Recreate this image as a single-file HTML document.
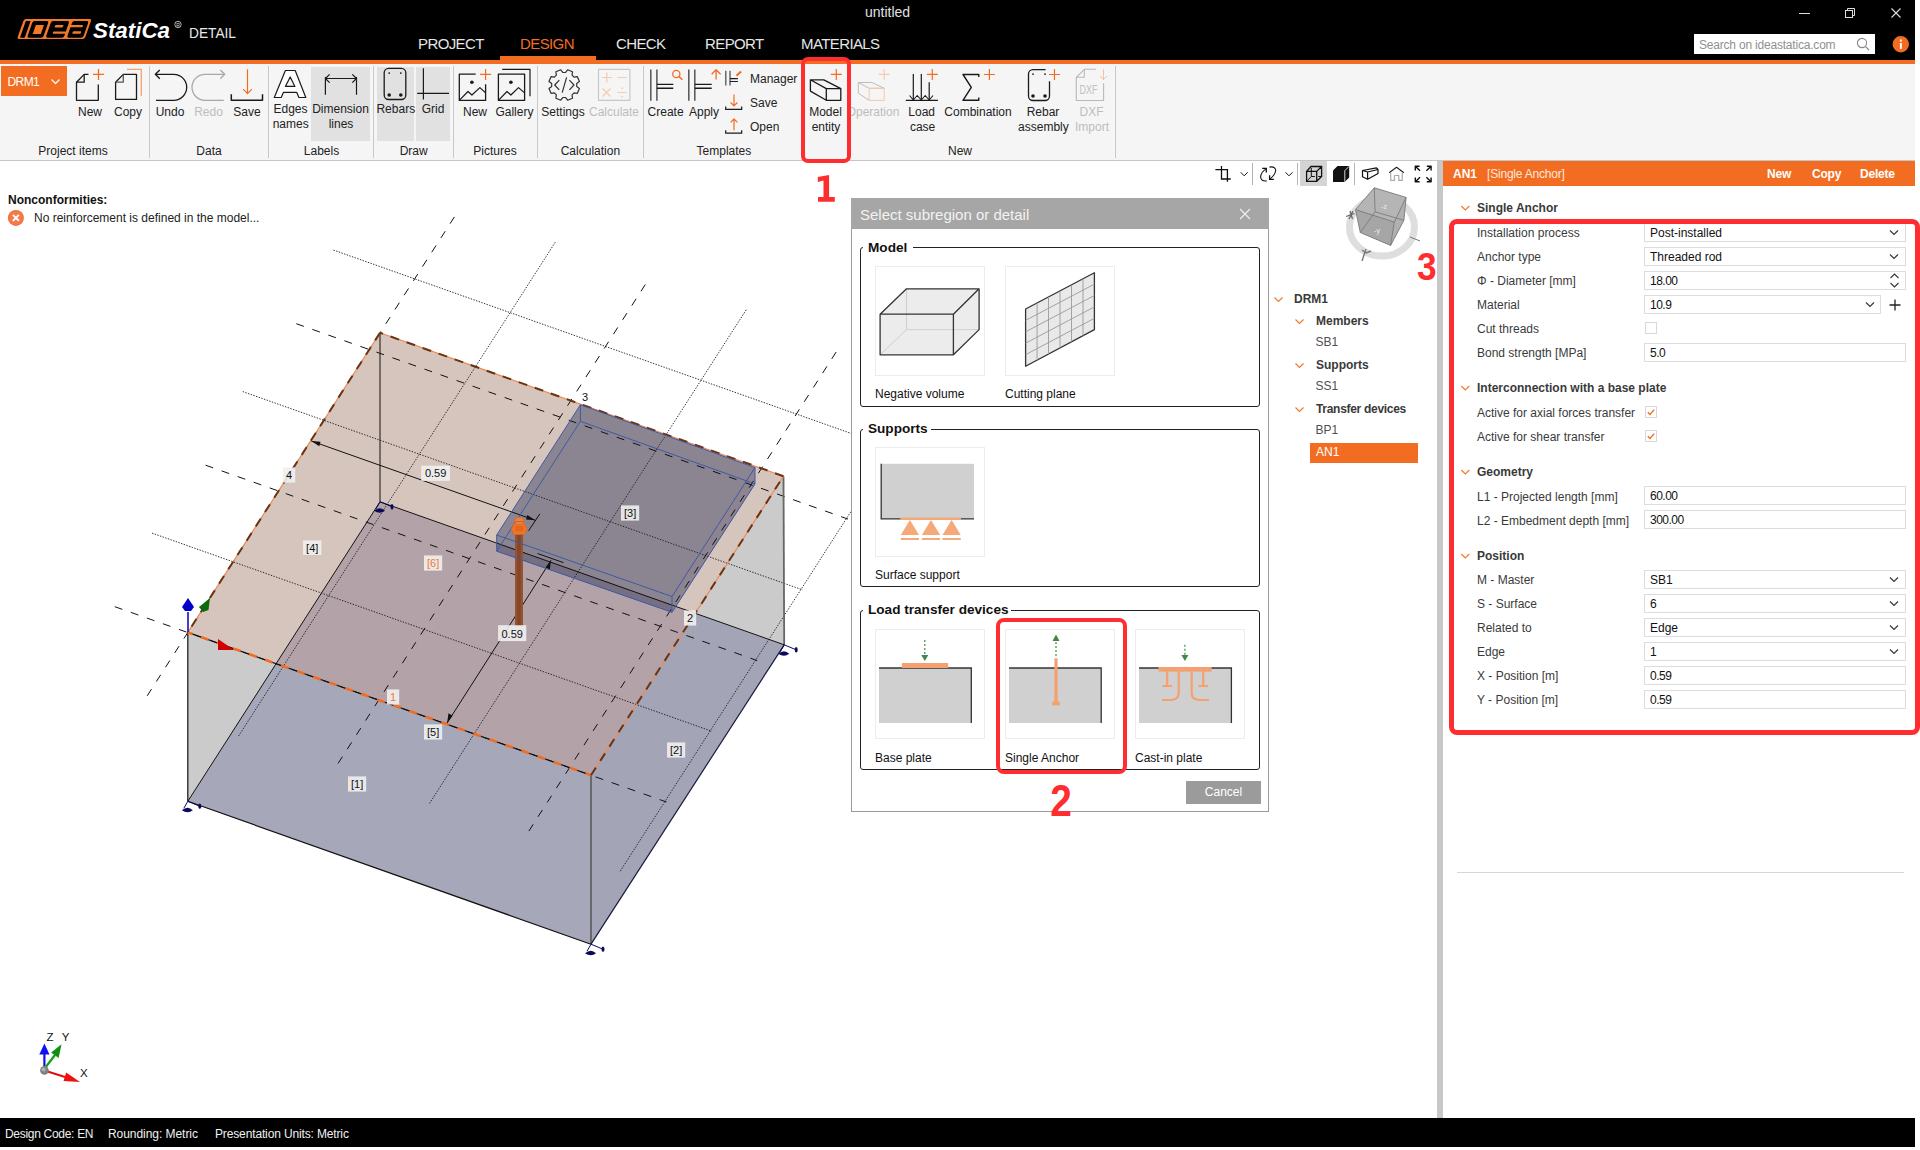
<!DOCTYPE html>
<html><head><meta charset="utf-8">
<style>
*{box-sizing:border-box}
html,body{margin:0;padding:0}
body{width:1920px;height:1150px;position:relative;overflow:hidden;background:#fff;font-family:"Liberation Sans",sans-serif;font-size:12px;color:#222}
.a{position:absolute;white-space:nowrap}
.bl{background:#000}
.or{background:#f26d22}
.menu{position:absolute;top:36px;font-size:15px;color:#e6e6e6;letter-spacing:-0.6px;line-height:15px}
.rb{position:absolute;font-size:12px;line-height:14px;color:#222;text-align:center;white-space:nowrap}
.dis{color:#bdbdbd}
.sep{position:absolute;top:66px;width:1px;height:92px;background:#c9c9c9}
.grp{position:absolute;top:144px;font-size:12px;line-height:14px;color:#222;white-space:nowrap}
.lbl{position:absolute;left:1477px;font-size:12px;color:#3a3a3a;line-height:14px;white-space:nowrap}
.fld{position:absolute;left:1644px;width:262px;height:19px;border:1px solid #dcdcdc;background:#fff;font-size:12px;line-height:18px;padding-left:5px;color:#111;white-space:nowrap}
.num{letter-spacing:-0.5px}
.sec{position:absolute;left:1477px;font-size:12px;font-weight:bold;color:#3a3a3a;line-height:14px;white-space:nowrap}
.chev{position:absolute;width:7px;height:7px;border-right:1.3px solid #f26d22;border-bottom:1.3px solid #f26d22;transform:rotate(45deg)}
.dchev{position:absolute;width:6px;height:6px;border-right:1.2px solid #333;border-bottom:1.2px solid #333;transform:rotate(45deg)}
.tree{position:absolute;font-size:12px;line-height:14px;color:#444;white-space:nowrap}
</style></head>
<body>
<!-- 3D view -->
<svg class="a" style="left:0;top:161px" width="1437" height="956" viewBox="0 161 1437 956">
<polygon points="187.8,632.4 380.0,332.8 783.5,476.2 695.2,613.3 380.0,501.8 276.1,663.6" fill="#d6c5bd" />
<polygon points="591.0,775.2 695.2,613.3 380.0,501.8 276.1,663.6" fill="#b3a3a9" />
<polygon points="187.8,632.4 276.1,663.6 187.8,801.3" fill="#cbcbcb" />
<polygon points="695.2,613.3 783.5,476.2 784.2,644.8" fill="#cbcbcb" />
<polygon points="276.1,663.6 591.0,775.2 591.0,944.2 187.8,801.3" fill="#a6a7b9" />
<polygon points="591.0,775.2 695.2,613.3 784.2,644.8 591.0,944.2" fill="#a3a4b6" />
<polygon points="580.4,404.8 755.0,467.6 755.0,483.9 672.0,612.3 496.7,551.2 496.7,535.0" fill="#8b8592" />
<polygon points="496.7,543.1 672.0,605.1 672.0,612.3 496.7,551.2" fill="#766e82" />
<polygon points="672.0,596.5 755.0,467.6 755.0,483.9 672.0,612.3" fill="#8e848f" />
<g>
<line x1="114.8" y1="606.7" x2="666.5" y2="802.0" stroke="#111" stroke-width="1" stroke-dasharray="8 9"/>
<line x1="152.0" y1="533.1" x2="711.9" y2="731.3" stroke="#1a1a1a" stroke-width="0.9" stroke-dasharray="1.4 1.4"/>
<line x1="205.6" y1="465.2" x2="757.2" y2="660.6" stroke="#111" stroke-width="1" stroke-dasharray="8 9"/>
<line x1="242.8" y1="391.6" x2="802.6" y2="589.9" stroke="#1a1a1a" stroke-width="0.9" stroke-dasharray="1.4 1.4"/>
<line x1="296.3" y1="323.7" x2="848.0" y2="519.1" stroke="#111" stroke-width="1" stroke-dasharray="8 9"/>
<line x1="333.5" y1="250.1" x2="893.4" y2="448.4" stroke="#1a1a1a" stroke-width="0.9" stroke-dasharray="1.4 1.4"/>
<line x1="454.4" y1="216.9" x2="143.1" y2="702.2" stroke="#111" stroke-width="1" stroke-dasharray="8 9"/>
<line x1="555.3" y1="242.2" x2="238.6" y2="736.0" stroke="#1a1a1a" stroke-width="0.9" stroke-dasharray="1.4 1.4"/>
<line x1="645.3" y1="284.5" x2="334.0" y2="769.8" stroke="#111" stroke-width="1" stroke-dasharray="8 9"/>
<line x1="746.2" y1="309.8" x2="429.4" y2="803.6" stroke="#1a1a1a" stroke-width="0.9" stroke-dasharray="1.4 1.4"/>
<line x1="836.1" y1="352.1" x2="524.8" y2="837.4" stroke="#111" stroke-width="1" stroke-dasharray="8 9"/>
<line x1="937.0" y1="377.4" x2="620.2" y2="871.2" stroke="#1a1a1a" stroke-width="0.9" stroke-dasharray="1.4 1.4"/>
</g>
<line x1="187.8" y1="632.4" x2="187.8" y2="801.3" stroke="#111" stroke-width="1.2" />
<line x1="380.0" y1="332.8" x2="380.0" y2="501.8" stroke="#111" stroke-width="1" />
<line x1="591.0" y1="775.2" x2="591.0" y2="944.2" stroke="#555" stroke-width="1.5" />
<line x1="783.5" y1="476.2" x2="784.2" y2="644.8" stroke="#666" stroke-width="1.8" />
<line x1="187.8" y1="801.3" x2="591.0" y2="944.2" stroke="#111" stroke-width="1.2" />
<line x1="591.0" y1="944.2" x2="784.2" y2="644.8" stroke="#1a1a40" stroke-width="1.2" />
<line x1="187.8" y1="801.3" x2="380.0" y2="501.8" stroke="#111" stroke-width="1" />
<line x1="380.0" y1="501.8" x2="784.2" y2="644.8" stroke="#111" stroke-width="1" />
<line x1="591.0" y1="775.2" x2="783.5" y2="476.2" stroke="#ec8a55" stroke-width="1.2" />
<line x1="783.5" y1="476.2" x2="380.0" y2="332.8" stroke="#ec8a55" stroke-width="1.2" />
<line x1="380.0" y1="332.8" x2="187.8" y2="632.4" stroke="#ec8a55" stroke-width="1.2" />
<line x1="187.8" y1="632.4" x2="591.0" y2="775.2" stroke="#111" stroke-width="1.2" />
<line x1="187.8" y1="632.4" x2="591.0" y2="775.2" stroke="#f26d22" stroke-width="2.6" stroke-dasharray="8 9" stroke-dashoffset="3"/>
<line x1="591.0" y1="775.2" x2="783.5" y2="476.2" stroke="#6a3412" stroke-width="2" stroke-dasharray="9 8"/>
<line x1="783.5" y1="476.2" x2="380.0" y2="332.8" stroke="#6a3412" stroke-width="2" stroke-dasharray="9 8"/>
<line x1="380.0" y1="332.8" x2="187.8" y2="632.4" stroke="#6a3412" stroke-width="2" stroke-dasharray="9 8"/>
<line x1="311.3" y1="441.0" x2="535.3" y2="520.3" stroke="#111" stroke-width="1" />
<polygon points="311.3,441 320.5,441.8 319.3,446.2" fill="#111"/>
<polygon points="535.3,520.3 526.1,519.5 527.3,515.1" fill="#111"/>
<line x1="539.8" y1="513.9" x2="528.5" y2="530.9" stroke="#111" stroke-width="1" />
<line x1="447.1" y1="723.0" x2="551.1" y2="560.3" stroke="#111" stroke-width="1" />
<polygon points="447.1,723 448.5,713.2 452.6,715.8" fill="#111"/>
<polygon points="551.1,560.3 549.7,570.1 545.6,567.5" fill="#111"/>
<line x1="537.6" y1="553.5" x2="563.6" y2="562.7" stroke="#111" stroke-width="1" />
<rect x="515" y="532" width="8" height="94" fill="#97522f"/>
<rect x="517.3" y="532" width="3.4" height="94" fill="#82462a"/>
<polygon points="580.4,404.8 755.0,467.6 672.0,596.5 496.7,535.0" fill="none" stroke="#3d5aa5" stroke-width="1"/>
<polygon points="580.4,421.3 755.0,483.9 672.0,612.3 496.7,551.2" fill="none" stroke="#3d5aa5" stroke-width="1"/>
<line x1="580.4" y1="404.8" x2="580.4" y2="421.3" stroke="#3d5aa5" stroke-width="1" />
<line x1="755.0" y1="467.6" x2="755.0" y2="483.9" stroke="#3d5aa5" stroke-width="1" />
<line x1="672.0" y1="596.5" x2="672.0" y2="612.3" stroke="#3d5aa5" stroke-width="1" />
<line x1="496.7" y1="535.0" x2="496.7" y2="551.2" stroke="#3d5aa5" stroke-width="1" />
<path d="M511.5 529 L514 523.5 H524.5 L527.2 529 L524.5 534.5 H514 Z" fill="#f07528" stroke="#e0651a" stroke-width="0.8"/>
<rect x="515.3" y="525.8" width="8" height="5.5" fill="#d86020" fill-opacity="0.7"/>
<rect x="515" y="517.5" width="8.6" height="7" rx="3" fill="#f08040" stroke="#e06a20" stroke-width="0.8"/>
<path d="M515.5 521.5 H523" stroke="#c85a20" stroke-width="0.8"/>
<rect x="421.2" y="465.7" width="28.8" height="15.2" fill="#efefef" fill-opacity="0.9"/>
<text x="435.6" y="477.4" font-family="Liberation Sans" font-size="11" fill="#111" text-anchor="middle">0.59</text>
<rect x="498.1" y="625.1999999999999" width="28.2" height="15.9" fill="#efefef" fill-opacity="0.9"/>
<text x="512.2" y="637.6" font-family="Liberation Sans" font-size="11" fill="#111" text-anchor="middle">0.59</text>
<rect x="303" y="540.4" width="18.4" height="14.6" fill="#efefef" fill-opacity="0.9"/>
<text x="312.2" y="551.5" font-family="Liberation Sans" font-size="11" fill="#111" text-anchor="middle">[4]</text>
<rect x="424" y="555.4" width="18.2" height="15.2" fill="#efefef" fill-opacity="0.9"/>
<text x="433.1" y="567.1" font-family="Liberation Sans" font-size="11" fill="#f07a30" text-anchor="middle">[6]</text>
<rect x="424" y="724.4" width="18.2" height="15.2" fill="#efefef" fill-opacity="0.9"/>
<text x="433.1" y="736.1" font-family="Liberation Sans" font-size="11" fill="#111" text-anchor="middle">[5]</text>
<rect x="348" y="776.4" width="18.2" height="15.2" fill="#efefef" fill-opacity="0.9"/>
<text x="357.1" y="788.1" font-family="Liberation Sans" font-size="11" fill="#111" text-anchor="middle">[1]</text>
<rect x="667" y="742.4" width="18.2" height="15.2" fill="#efefef" fill-opacity="0.9"/>
<text x="676.1" y="754.1" font-family="Liberation Sans" font-size="11" fill="#111" text-anchor="middle">[2]</text>
<rect x="621" y="505.4" width="18.2" height="15.2" fill="#efefef" fill-opacity="0.9"/>
<text x="630.1" y="517.1" font-family="Liberation Sans" font-size="11" fill="#111" text-anchor="middle">[3]</text>
<rect x="387" y="689.4" width="12.2" height="15.2" fill="#efefef" fill-opacity="0.9"/>
<text x="393.1" y="701.1" font-family="Liberation Sans" font-size="11" fill="#f07a30" text-anchor="middle">1</text>
<rect x="684" y="610.4" width="12.2" height="15.2" fill="#efefef" fill-opacity="0.9"/>
<text x="690.1" y="622.1" font-family="Liberation Sans" font-size="11" fill="#111" text-anchor="middle">2</text>
<text x="585" y="401" font-family="Liberation Sans" font-size="11" fill="#111" text-anchor="middle">3</text>
<rect x="283" y="467.4" width="12.2" height="15.2" fill="#efefef" fill-opacity="0.9"/>
<text x="289.1" y="479.1" font-family="Liberation Sans" font-size="11" fill="#111" text-anchor="middle">4</text>
<path d="M181.8 810.3 q6 -5 11 0 q-5 4 -11 0 Z" fill="#0a0a5a"/>
<line x1="187.8" y1="801.3" x2="183.8" y2="808.3" stroke="#0a0a5a" stroke-width="1"/>
<line x1="187.8" y1="801.3" x2="199.8" y2="806.3" stroke="#0a0a5a" stroke-width="1"/>
<ellipse cx="199.8" cy="806.3" rx="1.5" ry="2.8" fill="#0a0a5a"/>
<path d="M374 510.8 q6 -5 11 0 q-5 4 -11 0 Z" fill="#0a0a5a"/>
<line x1="380" y1="501.8" x2="376" y2="508.8" stroke="#0a0a5a" stroke-width="1"/>
<line x1="380" y1="501.8" x2="392" y2="506.8" stroke="#0a0a5a" stroke-width="1"/>
<ellipse cx="392" cy="506.8" rx="1.5" ry="2.8" fill="#0a0a5a"/>
<path d="M778.2 653.8 q6 -5 11 0 q-5 4 -11 0 Z" fill="#0a0a5a"/>
<line x1="784.2" y1="644.8" x2="780.2" y2="651.8" stroke="#0a0a5a" stroke-width="1"/>
<line x1="784.2" y1="644.8" x2="796.2" y2="649.8" stroke="#0a0a5a" stroke-width="1"/>
<ellipse cx="796.2" cy="649.8" rx="1.5" ry="2.8" fill="#0a0a5a"/>
<path d="M585 953.2 q6 -5 11 0 q-5 4 -11 0 Z" fill="#0a0a5a"/>
<line x1="591" y1="944.2" x2="587" y2="951.2" stroke="#0a0a5a" stroke-width="1"/>
<line x1="591" y1="944.2" x2="603" y2="949.2" stroke="#0a0a5a" stroke-width="1"/>
<ellipse cx="603" cy="949.2" rx="1.5" ry="2.8" fill="#0a0a5a"/>
<line x1="188.0" y1="632.0" x2="188.0" y2="612.0" stroke="#0000c0" stroke-width="1.5" />
<path d="M188 598 L194 607 L191 611 H185 L182 607 Z" fill="#0000c8"/>
<path d="M210 598 L208.5 610 L203 612 L199 607 Z" fill="#0b6a10"/>
<path d="M218 643 L218 650 L234 650 Z" fill="#c00000"/>
<path d="M218 639 L218 650 L234 650 Z" fill="#d00000"/>
</svg>
<!-- Nonconformities -->
<div class="a" style="left:8px;top:193.8px;font-size:12px;line-height:12px;font-weight:bold;color:#111">Nonconformities:</div>
<svg class="a" style="left:6px;top:208px" width="20" height="20">
 <circle cx="9.9" cy="9.9" r="8" fill="#f26d3a"/>
 <circle cx="9.9" cy="9.9" r="7" fill="#f47a48"/>
 <path d="M6.9 6.9 L12.9 12.9 M12.9 6.9 L6.9 12.9" stroke="#fff" stroke-width="2"/>
</svg>
<div class="a" style="left:34px;top:211.6px;font-size:12px;line-height:12px;color:#222">No reinforcement is defined in the model...</div>

<!-- View toolbar -->
<div class="a" style="left:1300px;top:161px;width:27px;height:25px;background:#d4d4d4"></div>
<svg class="a" style="left:1200px;top:160px" width="237" height="30">
 <g transform="translate(-1200,-160)">
 <g fill="none" stroke="#111" stroke-width="1.3">
  <path d="M1221.5 166.1 V179 H1230.7 M1215.4 169.6 H1227.4 V181.8"/>
  <path d="M1240.7 172.3 L1244.2 175.8 L1247.7 172.3" stroke-width="1"/>
  <path d="M1266.3 168.6 Q1261 172 1260.6 177 Q1261 181.5 1266.7 180.9" stroke-width="1.1"/>
  <path d="M1262.2 168.4 H1266.3 V172.5" stroke-width="1.3"/>
  <path d="M1269.5 167.1 Q1275.5 166 1275.7 170.5 Q1275 175 1269.8 179.2" stroke-width="1.1"/>
  <path d="M1273.8 179.4 H1269.6 V175.3" stroke-width="1.3"/>
  <path d="M1285.5 172.3 L1289 175.8 L1292.5 172.3" stroke-width="1"/>
  <path d="M1306.6 171.4 H1316.7 V181.3 H1306.6 Z M1306.6 171.4 L1311 166.5 H1321.6 V176.5 L1316.7 181.3 M1316.7 171.4 L1321.6 166.5"/>
  <path d="M1311.3 168 V176.5 H1314.8 M1306.6 181.3 L1311.3 176.5 M1318.3 176.5 H1321.6" stroke-width="1"/>
 </g>
 <path d="M1333 170.5 L1337.5 166 H1349.2 V177.5 L1344.6 182 H1333 Z" fill="#111"/>
 <path d="M1344.8 170.6 L1349 166.4 M1344.8 170.6 V181.8" stroke="#e8e8e8" stroke-width="0.9"/>
 <g stroke="#b4b4b4" stroke-width="1"><line x1="1252.5" y1="163" x2="1252.5" y2="185"/><line x1="1297.5" y1="163" x2="1297.5" y2="185"/><line x1="1354.5" y1="163" x2="1354.5" y2="185"/></g>
 <g fill="none" stroke="#111" stroke-width="1.2" stroke-linejoin="round">
  <path d="M1362.5 170.5 L1376.4 167.8 L1378 169.5 L1367.6 172 Z M1362.5 170.5 V176.7 L1367.6 179.3 V172 M1378 169.5 V173.5 L1367.6 179.3"/>
  <path d="M1390.7 173 V180.4 H1394.5 V175.5 H1398.8 V180.4 H1402.2 V173" stroke="#aaa" stroke-width="1.2"/>
  <path d="M1389.2 172.8 L1396.5 167.3 L1403.9 172.8" stroke="#222" stroke-width="1.1"/>
  <path d="M1420 170.8 L1415.6 166.6 M1415.3 170.5 V166.3 H1419.6 M1426.4 170.8 L1430.8 166.6 M1426.8 166.3 H1431.1 V170.5 M1420 177.2 L1415.6 181.4 M1415.3 177.5 V181.7 H1419.6 M1426.4 177.2 L1430.8 181.4 M1426.8 181.7 H1431.1 V177.5" stroke-width="1.4"/>
 </g>
 </g>
</svg>

<!-- Nav cube -->
<svg class="a" style="left:1335px;top:182px" width="95" height="85">
 <g transform="translate(-1335,-182)">
  <ellipse cx="1382" cy="227" rx="32.5" ry="29" fill="none" stroke="#dedede" stroke-width="7"/>
  <polygon points="1374.3,187.8 1406.1,197.4 1403.9,220.3 1390.6,245.4 1360.3,232.5 1355.5,209.6" fill="#b5b5b5"/>
  <polygon points="1355.5,209.6 1394.3,222.1 1390.6,245.4 1360.3,232.5" fill="#a6a6a6"/>
  <polygon points="1394.3,222.1 1406.1,197.4 1403.9,220.3 1390.6,245.4" fill="#b0b0b0"/>
  <g fill="none" stroke="#7a7a7a" stroke-width="0.9">
   <polygon points="1374.3,187.8 1406.1,197.4 1403.9,220.3 1390.6,245.4 1360.3,232.5 1355.5,209.6"/>
   <path d="M1374.3 187.8 L1375.1 211.8 L1403.9 220.3 M1375.1 211.8 L1360.3 232.5 M1355.5 209.6 L1394.3 222.1 L1406.1 197.4 M1394.3 222.1 L1390.6 245.4"/>
  </g>
  <text x="1384" y="209" font-family="Liberation Sans" font-size="7" fill="#eee" text-anchor="middle">-z</text>
  <text x="1377" y="233" font-family="Liberation Sans" font-size="7" fill="#eee" text-anchor="middle">-y</text>
  <path d="M1346 216.5 L1354.5 213.5 M1350 211 L1352.5 219 M1349 219 L1353 211" stroke="#666" stroke-width="1.2"/>
  <path d="M1410 237 L1420 241" stroke="#777" stroke-width="1"/>
  <path d="M1362 261 L1366 249 M1366 253 L1371 251 M1366 253 L1362 250" stroke="#777" stroke-width="1.4"/>
 </g>
</svg>

<!-- bottom-left axes -->
<svg class="a" style="left:30px;top:1030px" width="70" height="60">
 <g transform="translate(-30,-1030)">
  <line x1="44.4" y1="1070" x2="44.4" y2="1054" stroke="#1010e0" stroke-width="2.2"/>
  <path d="M44.4 1043.5 L49.5 1054.5 H39.3 Z" fill="#1010f0"/>
  <line x1="45" y1="1068" x2="55" y2="1055" stroke="#10a010" stroke-width="2.2"/>
  <path d="M61.5 1044.3 L58.6 1058 L51.2 1052.5 Z" fill="#109010"/>
  <line x1="46" y1="1071" x2="65" y2="1077" stroke="#e01010" stroke-width="2.2"/>
  <path d="M80 1082 L63.5 1081 L66.2 1072.5 Z" fill="#f01010"/>
  <circle cx="44.4" cy="1070.4" r="4.3" fill="#808080"/>
  <circle cx="43.6" cy="1069.4" r="2" fill="#b0b0b0"/>
  <text x="46.5" y="1041" font-family="Liberation Sans" font-size="11.5" fill="#111">Z</text>
  <text x="61.7" y="1041" font-family="Liberation Sans" font-size="11.5" fill="#111">Y</text>
  <text x="80" y="1077" font-family="Liberation Sans" font-size="11.5" fill="#111">X</text>
 </g>
</svg>

<!-- Title bar -->
<div class="a bl" style="left:0;top:0;width:1915px;height:60px"></div>
<div class="a or" style="left:0;top:60px;width:1915px;height:4px"></div>
<svg class="a" style="left:0;top:0" width="260" height="60">
 <g transform="translate(17,18.9) matrix(1,0,-0.35,1,7.07,0)">
  <rect x="0" y="0" width="67.6" height="20.2" rx="2" fill="#f47a2a"/>
  <rect x="2.5" y="2.1" width="4.8" height="16.7" rx="0.6" fill="#000"/>
  <rect x="9.5" y="2.1" width="16" height="16.7" rx="2" fill="#000"/>
  <rect x="28.1" y="2.1" width="18.1" height="16.7" rx="2" fill="#000"/>
  <rect x="49.3" y="2.1" width="16.2" height="16.7" rx="2" fill="#000"/>
  <rect x="13.9" y="6" width="8.1" height="9" fill="#f47a2a"/>
  <rect x="33.3" y="6.2" width="8.4" height="2.3" rx="0.8" fill="#f47a2a"/>
  <rect x="33.6" y="12.7" width="13" height="2.1" rx="0.8" fill="#f47a2a"/>
  <rect x="47" y="6.2" width="14.3" height="2.1" rx="0.8" fill="#f47a2a"/>
  <rect x="53.2" y="12.3" width="8.5" height="2.5" rx="0.8" fill="#f47a2a"/>
 </g>
 <text x="93" y="38" font-family="Liberation Sans" font-weight="bold" font-style="italic" font-size="22" fill="#fff" textLength="77" lengthAdjust="spacingAndGlyphs">StatiCa</text>
 <circle cx="178" cy="24.5" r="3.2" fill="none" stroke="#ddd" stroke-width="0.8"/>
 <text x="176.2" y="26.6" font-family="Liberation Sans" font-size="5" fill="#ddd">R</text>
 <text x="189" y="38" font-family="Liberation Sans" font-size="14.5" fill="#e8e8e8" textLength="47" lengthAdjust="spacingAndGlyphs">DETAIL</text>
</svg>
<div class="a" style="left:865px;top:5px;font-size:14px;line-height:14px;color:#e0e0e0">untitled</div>
<div class="menu" style="left:418px">PROJECT</div>
<div class="menu" style="left:520px;color:#f26d22">DESIGN</div>
<div class="menu" style="left:616px">CHECK</div>
<div class="menu" style="left:705px">REPORT</div>
<div class="menu" style="left:801px">MATERIALS</div>
<div class="a or" style="left:500px;top:56px;width:96px;height:5px"></div>
<svg class="a" style="left:1790px;top:0" width="125" height="60">
 <line x1="9" y1="13.5" x2="20" y2="13.5" stroke="#ddd" stroke-width="1"/>
 <rect x="55.5" y="10.5" width="7" height="7" fill="none" stroke="#ddd" stroke-width="1"/>
 <path d="M57.5 10.5 V8.5 H64.5 V15.5 H62.5" fill="none" stroke="#ddd" stroke-width="1"/>
 <path d="M101.5 8.5 L110.5 17.5 M110.5 8.5 L101.5 17.5" stroke="#ddd" stroke-width="1.1"/>
</svg>
<div class="a" style="left:1694px;top:34px;width:181px;height:20px;background:#fff"></div>
<div class="a" style="left:1699px;top:39px;font-size:12px;line-height:12px;color:#909090;letter-spacing:-0.2px">Search on ideastatica.com</div>
<svg class="a" style="left:1855px;top:36px" width="18" height="18">
 <circle cx="7" cy="7" r="4.6" fill="none" stroke="#888" stroke-width="1.1"/>
 <line x1="10.3" y1="10.3" x2="14" y2="14" stroke="#888" stroke-width="1.2"/>
</svg>
<svg class="a" style="left:1890px;top:34px" width="22" height="22">
 <circle cx="10.8" cy="10.3" r="8.2" fill="#f26d22"/>
 <rect x="9.9" y="9" width="1.9" height="6" fill="#fff"/>
 <rect x="9.9" y="5.6" width="1.9" height="2" fill="#fff"/>
</svg>

<!-- Ribbon -->
<div class="a" style="left:0;top:64px;width:1915px;height:96px;background:#f5f5f5"></div>
<div class="a" style="left:0;top:160px;width:1915px;height:1px;background:#c6c6c6"></div>
<div class="a" style="left:311px;top:67px;width:59px;height:74px;background:#e1e1e1"></div>
<div class="a" style="left:377px;top:67px;width:37px;height:74px;background:#e1e1e1"></div>
<div class="a" style="left:416px;top:67px;width:34px;height:74px;background:#e1e1e1"></div>
<div class="sep" style="left:149px"></div>
<div class="sep" style="left:268px"></div>
<div class="sep" style="left:373px"></div>
<div class="sep" style="left:453px"></div>
<div class="sep" style="left:537px"></div>
<div class="sep" style="left:643px"></div>
<div class="sep" style="left:802px"></div>
<div class="sep" style="left:1115px"></div>
<div class="a or" style="left:1px;top:66px;width:66px;height:30px"></div>
<div class="a" style="left:7.5px;top:76px;font-size:12px;line-height:12px;color:#fff;letter-spacing:-0.6px">DRM1</div>
<svg class="a" style="left:0;top:0" width="1120" height="165">
 <g fill="none" stroke="#1a1a1a" stroke-width="1.3" stroke-linejoin="round" stroke-linecap="butt">
  <!-- DRM1 chevron -->
  <path d="M51.5 79.5 L55.5 83.5 L59.5 79.5" stroke="#fff" stroke-width="1.2"/>
  <!-- New page -->
  <path d="M88.5 74.4 H84.2 L76.5 82.3 V100.3 H98.3 V84.4"/>
  <path d="M84.2 74.4 V82.2 H76.5" />
  <path d="M98.5 69 V80 M93 74.4 H104" stroke="#f26d22"/>
  <!-- Copy page -->
  <path d="M123.3 74.4 H136.5 V99.4 H115.6 V82.3 Z"/>
  <path d="M123.3 74.4 V82.1 H115.6" stroke="#555"/>
  <path d="M127 69.4 H141.3 V95.7" stroke="#f5a070"/>
  <!-- Undo -->
  <path d="M155.3 74.3 H173.7 A13 13 0 0 1 173.7 100.3 H156"/>
  <path d="M159.8 70 L155.3 74.3 L159.8 78.7"/>
  <!-- Redo -->
  <path d="M224.7 74.3 H205 A13 13 0 0 0 205 100.3 H223.8" stroke="#a8a8a8"/>
  <path d="M220.3 70 L224.7 74.3 L220.3 78.7" stroke="#a8a8a8"/>
  <!-- Save -->
  <path d="M247.5 69.3 V93.6 M243.1 89.2 L247.5 93.6 L251.9 89.2" stroke="#f26d22" stroke-width="1.2"/>
  <path d="M231.3 94.3 V100.2 H262.5 V94.3" stroke-width="1.5"/>
  <!-- Edges names A -->
  <path d="M285.4 70.5 H295.2 L305.8 97.5 H298.9 L296.8 92.4 H283.4 L281.2 97.5 H274.3 Z" fill="#fff" stroke-width="1.2"/>
  <path d="M290.2 77 L285.4 86.4 H294.9 Z" fill="#f5f5f5" stroke-width="1.2"/>
  <!-- Dimension lines -->
  <path d="M325.4 77 V94.8 M356.5 77 V94.8 M325.4 78.5 H356.5 M329.6 74.3 L325.4 78.5 L329.6 82.7 M352.3 74.3 L356.5 78.5 L352.3 82.7" stroke-width="1.2"/>
  <!-- Rebars -->
  <rect x="384.2" y="68.3" width="21.6" height="31.2" rx="4.5" stroke-width="1.3"/>
  <circle cx="389.2" cy="73.1" r="0.9" fill="#1a1a1a" stroke="none"/>
  <circle cx="400.8" cy="73.1" r="0.9" fill="#1a1a1a" stroke="none"/>
  <circle cx="389.2" cy="95" r="1.8" fill="#1a1a1a" stroke="none"/>
  <circle cx="400.8" cy="95" r="1.8" fill="#1a1a1a" stroke="none"/>
  <!-- Grid -->
  <path d="M423.4 68.3 V99.6 M417.2 93.4 H449" stroke-width="1.2"/>
  <!-- Picture New -->
  <path d="M475.7 74.1 H459.3 V100.4 H485.6 V84.2" stroke-width="1.3"/>
  <path d="M459.3 100.4 L468 91.5 L471.9 95 L479.9 87.6 L485.6 92.9" stroke-width="1.2"/>
  <circle cx="471.9" cy="82.3" r="1.8" fill="#1a1a1a" stroke="none"/>
  <path d="M485.6 69 V80 M480.1 74.4 H491.1" stroke="#f26d22" stroke-width="1.2"/>
  <!-- Gallery -->
  <rect x="498.4" y="74.1" width="26.2" height="26.3" stroke-width="1.3"/>
  <path d="M502.2 69.3 H530 V96.3" stroke-width="1.2"/>
  <path d="M498.4 100.4 L507 91.5 L510.9 95 L518.5 87.6 L524.6 92.9" stroke-width="1.2"/>
  <circle cx="510.9" cy="82.3" r="1.8" fill="#1a1a1a" stroke="none"/>
  <!-- Settings gear -->
  <path d="M576.72 86.42 L579.41 88.45 L577.39 93.32 L574.05 92.85 L572.05 94.85 L572.52 98.19 L567.65 100.21 L565.62 97.52 L562.78 97.52 L560.75 100.21 L555.88 98.19 L556.35 94.85 L554.35 92.85 L551.01 93.32 L548.99 88.45 L551.68 86.42 L551.68 83.58 L548.99 81.55 L551.01 76.68 L554.35 77.15 L556.35 75.15 L555.88 71.81 L560.75 69.79 L562.78 72.48 L565.62 72.48 L567.65 69.79 L572.52 71.81 L572.05 75.15 L574.05 77.15 L577.39 76.68 L579.41 81.55 L576.72 83.58 Z" stroke="#333" stroke-width="1.2"/>
  <path d="M559.3 80.2 L554.7 85 L559.3 89.8 M569.4 80.2 L574 85 L569.4 89.8 M566.6 77.3 L562.2 92.7" stroke="#333" stroke-width="1.2"/>
  <!-- Calculate disabled -->
  <rect x="598.5" y="69.3" width="31.4" height="31.1" stroke="#c8c8c8" stroke-width="1.2"/>
  <path d="M606.8 72.5 V82.5 M601.8 77.5 H611.8 M617.5 77.5 H627 M602.5 88.5 L610.5 96.5 M610.5 88.5 L602.5 96.5 M617.5 92.5 H627" stroke="#f8c9ab" stroke-width="1.2"/>
  <circle cx="622.3" cy="88.2" r="0.9" fill="#f8c9ab" stroke="none"/>
  <circle cx="622.3" cy="96.6" r="0.9" fill="#f8c9ab" stroke="none"/>
  <!-- Create -->
  <path d="M650.8 69.4 V100.7 M656.9 69.4 V100.7" stroke="#555" stroke-width="1.5"/>
  <path d="M656.9 84.4 H673.3 M656.9 88.3 H673.3" stroke-width="1.4"/>
  <circle cx="676.3" cy="74" r="3.6" stroke="#f26d22" stroke-width="1.3"/>
  <path d="M678.9 76.6 L682.5 79.8" stroke="#f26d22" stroke-width="1.5"/>
  <!-- Apply -->
  <path d="M688.8 69.4 V100.7 M694.8 69.4 V100.7" stroke="#555" stroke-width="1.5"/>
  <path d="M694.8 84.4 H711.7 M694.8 88.3 H711.7" stroke-width="1.4"/>
  <path d="M716.1 69.8 V79.4 M711.6 74.3 L716.1 69.8 L720.6 74.3" stroke="#f26d22" stroke-width="1.3"/>
  <!-- Manager -->
  <path d="M725.8 70.7 V85.5 M730 70.7 V85.5" stroke="#555" stroke-width="1.3"/>
  <path d="M730 78.6 H737.9 M730 81.5 H737.9" stroke-width="1.2"/>
  <path d="M736.5 75.8 L741 71.5" stroke="#f26d22" stroke-width="2"/>
  <!-- Save small -->
  <path d="M734 94.4 V105.8 M730.6 102.5 L734 105.9 L737.4 102.5" stroke="#f26d22" stroke-width="1.2"/>
  <path d="M725.7 106.5 V109.4 H741.7 V106.5" stroke-width="1.2"/>
  <!-- Open small -->
  <path d="M734 130.2 V119 M730.6 122.4 L734 119 L737.4 122.4" stroke="#f26d22" stroke-width="1.2"/>
  <path d="M725.7 130.3 V133.2 H741.7 V130.3" stroke-width="1.2"/>
  <!-- Model entity -->
  <path d="M810.4 79.8 H823.8 L840.8 88.6 H826.3 Z M826.3 88.6 V100.3 H840.8 V88.6 M810.4 79.8 V91.1 L826.3 100.3" stroke-width="1.3"/>
  <path d="M836.3 69 V80 M830.8 74.4 H841.8" stroke="#f26d22" stroke-width="1.2"/>
  <!-- Operation disabled -->
  <path d="M858.3 82.5 H872 L884.2 88.3 H869.2 Z M858.3 82.5 V93.2 L869.2 100.4" stroke="#bdbdbd" stroke-width="1"/>
  <rect x="869.2" y="88.3" width="15" height="12.1" stroke="#f8c9ab" stroke-width="1"/>
  <path d="M884.2 69 V80 M878.7 74.4 H889.7" stroke="#f8c9ab" stroke-width="1.1"/>
  <!-- Load case -->
  <path d="M913.3 74 V100 M921.3 74 V100 M929.2 82.3 V100 M905.8 100.3 H937.9" stroke-width="1.2"/>
  <path d="M909.6 95.5 L913.3 100 L917.2 95.5 L921.3 100 L925.2 95.5 L929.2 100 L933 95.5" stroke-width="1.1"/>
  <path d="M932.3 69 V80 M926.8 74.4 H937.8" stroke="#f26d22" stroke-width="1.2"/>
  <!-- Combination sigma -->
  <path d="M978.8 77 V74.5 H963 L971.3 87.3 L963 100.3 H978.8 V97.5" stroke-width="1.4"/>
  <path d="M989.4 69 V80 M983.9 74.5 H994.9" stroke="#f26d22" stroke-width="1.2"/>
  <!-- Rebar assembly -->
  <path d="M1045.6 69.6 H1033 A4.5 4.5 0 0 0 1028.5 74.1 V96 A4.5 4.5 0 0 0 1033 100.5 H1045 A4.5 4.5 0 0 0 1049.5 96 V81.2" stroke-width="1.3"/>
  <circle cx="1033" cy="74.1" r="0.9" fill="#1a1a1a" stroke="none"/>
  <circle cx="1045" cy="74.1" r="0.9" fill="#1a1a1a" stroke="none"/>
  <circle cx="1033" cy="96" r="1.8" fill="#1a1a1a" stroke="none"/>
  <circle cx="1045" cy="96" r="1.8" fill="#1a1a1a" stroke="none"/>
  <path d="M1054.5 69 V80 M1049 74.5 H1060" stroke="#f26d22" stroke-width="1.2"/>
  <!-- DXF import -->
  <path d="M1095.9 69.3 H1084.3 L1076.3 77.3 V100.5 H1103.6 V83.3 M1084.3 69.3 V77.3 H1076.3" stroke="#b8b8b8" stroke-width="1.1"/>
  <path d="M1103.5 69.3 V79.5 M1099.8 75.8 L1103.5 79.5 L1107.2 75.8" stroke="#f8c0a0" stroke-width="1"/>
 </g>
 <text x="1079.5" y="93.5" font-family="Liberation Sans" font-size="12" fill="#c0c0c0" textLength="18" lengthAdjust="spacingAndGlyphs">DXF</text>
</svg>
<div class="rb " style="left:30px;top:105px;width:120px">New</div>
<div class="rb " style="left:68px;top:105px;width:120px">Copy</div>
<div class="rb " style="left:110px;top:105px;width:120px">Undo</div>
<div class="rb dis" style="left:148.5px;top:105px;width:120px">Redo</div>
<div class="rb " style="left:187px;top:105px;width:120px">Save</div>
<div class="rb " style="left:230.5px;top:102.2px;width:120px">Edges</div>
<div class="rb " style="left:230.7px;top:117.2px;width:120px">names</div>
<div class="rb " style="left:280.5px;top:102.2px;width:120px">Dimension</div>
<div class="rb " style="left:281px;top:117.2px;width:120px">lines</div>
<div class="rb " style="left:335.8px;top:102.2px;width:120px">Rebars</div>
<div class="rb " style="left:373px;top:102.2px;width:120px">Grid</div>
<div class="rb " style="left:415px;top:105px;width:120px">New</div>
<div class="rb " style="left:454.4px;top:105px;width:120px">Gallery</div>
<div class="rb " style="left:503px;top:105px;width:120px">Settings</div>
<div class="rb dis" style="left:554px;top:105px;width:120px">Calculate</div>
<div class="rb " style="left:605.6px;top:105px;width:120px">Create</div>
<div class="rb " style="left:644px;top:105px;width:120px">Apply</div>
<div class="rb" style="left:750px;top:72px;text-align:left">Manager</div>
<div class="rb" style="left:750px;top:96px;text-align:left">Save</div>
<div class="rb" style="left:750px;top:120px;text-align:left">Open</div>
<div class="rb " style="left:765.5px;top:105px;width:120px">Model</div>
<div class="rb " style="left:766px;top:120px;width:120px">entity</div>
<div class="rb dis" style="left:813px;top:105px;width:120px">Operation</div>
<div class="rb " style="left:861.7px;top:105px;width:120px">Load</div>
<div class="rb " style="left:862.6px;top:120px;width:120px">case</div>
<div class="rb " style="left:918px;top:105px;width:120px">Combination</div>
<div class="rb " style="left:983px;top:105px;width:120px">Rebar</div>
<div class="rb " style="left:983.4000000000001px;top:120px;width:120px">assembly</div>
<div class="rb dis" style="left:1031.5px;top:105px;width:120px">DXF</div>
<div class="rb dis" style="left:1032px;top:120px;width:120px">Import</div>
<div class="grp" style="left:13px;top:144.4px;width:120px;text-align:center">Project items</div>
<div class="grp" style="left:149px;top:144.4px;width:120px;text-align:center">Data</div>
<div class="grp" style="left:261.5px;top:144.4px;width:120px;text-align:center">Labels</div>
<div class="grp" style="left:353.7px;top:144.4px;width:120px;text-align:center">Draw</div>
<div class="grp" style="left:435px;top:144.4px;width:120px;text-align:center">Pictures</div>
<div class="grp" style="left:530.4px;top:144.4px;width:120px;text-align:center">Calculation</div>
<div class="grp" style="left:663.9px;top:144.4px;width:120px;text-align:center">Templates</div>
<div class="grp" style="left:900px;top:144.4px;width:120px;text-align:center">New</div>
<!-- Status bar -->
<div class="a bl" style="left:0;top:1118px;width:1915px;height:29px"></div>
<div class="a" style="left:5px;top:1128px;font-size:12px;line-height:12px;color:#f0f0f0;letter-spacing:-0.3px">Design Code: EN</div>
<div class="a" style="left:108px;top:1128px;font-size:12px;line-height:12px;color:#f0f0f0;letter-spacing:-0.05px">Rounding: Metric</div>
<div class="a" style="left:215px;top:1128px;font-size:12px;line-height:12px;color:#f0f0f0;letter-spacing:-0.14px">Presentation Units: Metric</div>
<!-- Splitter -->
<div class="a" style="left:1437px;top:161px;width:6px;height:957px;background:#c8c8c8"></div>
<!-- Right panel -->
<div class="a or" style="left:1443px;top:161px;width:472px;height:25px"></div>
<div class="a" style="left:1453px;top:168px;font-size:12px;line-height:12px;color:#fff;font-weight:bold">AN1</div>
<div class="a" style="left:1487px;top:168px;font-size:12px;line-height:12px;color:#fde7da;letter-spacing:-0.2px">[Single Anchor]</div>
<div class="a" style="left:1767px;top:168px;font-size:12px;line-height:12px;color:#fff;font-weight:bold;letter-spacing:-0.2px">New</div>
<div class="a" style="left:1812px;top:168px;font-size:12px;line-height:12px;color:#fff;font-weight:bold;letter-spacing:-0.2px">Copy</div>
<div class="a" style="left:1860px;top:168px;font-size:12px;line-height:12px;color:#fff;font-weight:bold;letter-spacing:-0.2px">Delete</div>
<div class="a" style="left:1457px;top:872px;width:447px;height:1px;background:#d6d6d6"></div>
<div class="sec" style="top:201.8px;line-height:12px">Single Anchor</div>
<svg class="a" style="left:1460px;top:204.0px" width="12" height="8"><path d="M1.3 2 L5.3 6 L9.3 2" fill="none" stroke="#f07a30" stroke-width="1.2"/></svg>
<div class="lbl" style="top:227.3px;line-height:12px">Installation process</div>
<div class="fld" style="top:223px;width:262px">Post-installed</div>
<svg class="a" style="left:1889px;top:229px" width="12" height="8"><path d="M1 1.5 L5 5.5 L9 1.5" fill="none" stroke="#333" stroke-width="1.1"/></svg>
<div class="lbl" style="top:251.3px;line-height:12px">Anchor type</div>
<div class="fld" style="top:247px;width:262px">Threaded rod</div>
<svg class="a" style="left:1889px;top:253px" width="12" height="8"><path d="M1 1.5 L5 5.5 L9 1.5" fill="none" stroke="#333" stroke-width="1.1"/></svg>
<div class="lbl" style="top:275.3px;line-height:12px">&Phi; - Diameter [mm]</div>
<div class="fld" style="top:271px;width:262px"><span class="num">18.00</span></div>
<svg class="a" style="left:1889px;top:272px" width="12" height="18"><path d="M1.5 6 L5.5 2 L9.5 6 M1.5 11 L5.5 15 L9.5 11" fill="none" stroke="#333" stroke-width="1.1"/></svg>
<div class="lbl" style="top:299.3px;line-height:12px">Material</div>
<div class="fld" style="top:295px;width:237px"><span class="num">10.9</span></div>
<svg class="a" style="left:1865px;top:301px" width="12" height="8"><path d="M1 1.5 L5 5.5 L9 1.5" fill="none" stroke="#333" stroke-width="1.1"/></svg>
<svg class="a" style="left:1888px;top:298px" width="14" height="14"><path d="M7 1.5 V12.5 M1.5 7 H12.5" stroke="#222" stroke-width="1.3"/></svg>
<div class="lbl" style="top:323.3px;line-height:12px">Cut threads</div>
<div class="a" style="left:1645px;top:322px;width:12px;height:12px;border:1px solid #d8d8d8;background:#fff"></div>
<div class="lbl" style="top:347.3px;line-height:12px">Bond strength [MPa]</div>
<div class="fld" style="top:343px;width:262px"><span class="num">5.0</span></div>
<div class="sec" style="top:381.8px;line-height:12px">Interconnection with a base plate</div>
<svg class="a" style="left:1460px;top:384.0px" width="12" height="8"><path d="M1.3 2 L5.3 6 L9.3 2" fill="none" stroke="#f07a30" stroke-width="1.2"/></svg>
<div class="lbl" style="top:406.8px;line-height:12px">Active for axial forces transfer</div>
<div class="a" style="left:1645px;top:406px;width:12px;height:12px;border:1px solid #d8d8d8;background:#fff"></div>
<svg class="a" style="left:1645px;top:406px" width="12" height="12"><path d="M2.8 6.2 L5 8.4 L9.2 3.6" fill="none" stroke="#f26d22" stroke-width="1.4"/></svg>
<div class="lbl" style="top:430.8px;line-height:12px">Active for shear transfer</div>
<div class="a" style="left:1645px;top:430px;width:12px;height:12px;border:1px solid #d8d8d8;background:#fff"></div>
<svg class="a" style="left:1645px;top:430px" width="12" height="12"><path d="M2.8 6.2 L5 8.4 L9.2 3.6" fill="none" stroke="#f26d22" stroke-width="1.4"/></svg>
<div class="sec" style="top:465.8px;line-height:12px">Geometry</div>
<svg class="a" style="left:1460px;top:468.0px" width="12" height="8"><path d="M1.3 2 L5.3 6 L9.3 2" fill="none" stroke="#f07a30" stroke-width="1.2"/></svg>
<div class="lbl" style="top:490.8px;line-height:12px">L1 - Projected length [mm]</div>
<div class="fld" style="top:486px;width:262px"><span class="num">60.00</span></div>
<div class="lbl" style="top:514.8px;line-height:12px">L2 - Embedment depth [mm]</div>
<div class="fld" style="top:510px;width:262px"><span class="num">300.00</span></div>
<div class="sec" style="top:549.8px;line-height:12px">Position</div>
<svg class="a" style="left:1460px;top:552.0px" width="12" height="8"><path d="M1.3 2 L5.3 6 L9.3 2" fill="none" stroke="#f07a30" stroke-width="1.2"/></svg>
<div class="lbl" style="top:574.3px;line-height:12px">M - Master</div>
<div class="fld" style="top:570px;width:262px">SB1</div>
<svg class="a" style="left:1889px;top:576px" width="12" height="8"><path d="M1 1.5 L5 5.5 L9 1.5" fill="none" stroke="#333" stroke-width="1.1"/></svg>
<div class="lbl" style="top:598.3px;line-height:12px">S - Surface</div>
<div class="fld" style="top:594px;width:262px"><span class="num">6</span></div>
<svg class="a" style="left:1889px;top:600px" width="12" height="8"><path d="M1 1.5 L5 5.5 L9 1.5" fill="none" stroke="#333" stroke-width="1.1"/></svg>
<div class="lbl" style="top:622.3px;line-height:12px">Related to</div>
<div class="fld" style="top:618px;width:262px">Edge</div>
<svg class="a" style="left:1889px;top:624px" width="12" height="8"><path d="M1 1.5 L5 5.5 L9 1.5" fill="none" stroke="#333" stroke-width="1.1"/></svg>
<div class="lbl" style="top:646.3px;line-height:12px">Edge</div>
<div class="fld" style="top:642px;width:262px"><span class="num">1</span></div>
<svg class="a" style="left:1889px;top:648px" width="12" height="8"><path d="M1 1.5 L5 5.5 L9 1.5" fill="none" stroke="#333" stroke-width="1.1"/></svg>
<div class="lbl" style="top:670.3px;line-height:12px">X - Position [m]</div>
<div class="fld" style="top:666px;width:262px"><span class="num">0.59</span></div>
<div class="lbl" style="top:694.3px;line-height:12px">Y - Position [m]</div>
<div class="fld" style="top:690px;width:262px"><span class="num">0.59</span></div>
<div class="a" style="left:1449px;top:219px;width:471px;height:516px;border:5px solid #fe2d30;border-radius:8px"></div>
<!-- Tree -->
<svg class="a" style="left:1270px;top:290px" width="40" height="140">
 <g fill="none" stroke="#f07a30" stroke-width="1.2">
  <path d="M4.5 7.5 L8.5 11.5 L12.5 7.5"/>
  <path d="M25.5 29.5 L29.5 33.5 L33.5 29.5"/>
  <path d="M25.5 73.5 L29.5 77.5 L33.5 73.5"/>
  <path d="M25.5 117.5 L29.5 121.5 L33.5 117.5"/>
 </g>
</svg>
<div class="tree" style="left:1294px;top:292.7px;line-height:12px;font-weight:bold;color:#3a3a3a">DRM1</div>
<div class="tree" style="left:1316px;top:314.8px;line-height:12px;font-weight:bold;color:#3a3a3a">Members</div>
<div class="tree" style="left:1315.5px;top:336.4px;line-height:12px;color:#505050">SB1</div>
<div class="tree" style="left:1316px;top:358.8px;line-height:12px;font-weight:bold;color:#3a3a3a">Supports</div>
<div class="tree" style="left:1315.5px;top:380.4px;line-height:12px;color:#505050">SS1</div>
<div class="tree" style="left:1316px;top:402.5px;line-height:12px;font-weight:bold;color:#3a3a3a;letter-spacing:-0.3px">Transfer devices</div>
<div class="tree" style="left:1315.5px;top:424.3px;line-height:12px;color:#505050">BP1</div>
<div class="a or" style="left:1310px;top:443px;width:108px;height:20px"></div>
<div class="tree" style="left:1316px;top:446.4px;line-height:12px;color:#fff">AN1</div>

<!-- Dialog -->
<div class="a" style="left:851px;top:198px;width:418px;height:614px;border:1px solid #9a9a9a;background:#fff"></div>
<div class="a" style="left:851px;top:198px;width:418px;height:31px;background:#a6a6a6"></div>
<div class="a" style="left:860px;top:207.3px;font-size:15px;line-height:15px;color:#f2f2f2">Select subregion or detail</div>
<svg class="a" style="left:1238px;top:207px" width="14" height="14"><path d="M2 2 L12 12 M12 2 L2 12" stroke="#f0f0f0" stroke-width="1.1"/></svg>

<div class="a" style="left:860px;top:247px;width:400px;height:160px;border:1.2px solid #222;border-radius:3px"></div>
<div class="a" style="left:863px;top:240px;width:50px;height:14px;background:#fff"></div>
<div class="a" style="left:868px;top:240.7px;font-size:13.6px;line-height:13px;font-weight:bold;color:#111">Model</div>

<div class="a" style="left:860px;top:429px;width:400px;height:158px;border:1.2px solid #222;border-radius:3px"></div>
<div class="a" style="left:863px;top:422px;width:68px;height:14px;background:#fff"></div>
<div class="a" style="left:868px;top:422px;font-size:13.6px;line-height:13px;font-weight:bold;color:#111">Supports</div>

<div class="a" style="left:860px;top:610px;width:400px;height:160px;border:1.2px solid #222;border-radius:3px"></div>
<div class="a" style="left:863px;top:603px;width:148px;height:14px;background:#fff"></div>
<div class="a" style="left:868px;top:603px;font-size:13.6px;line-height:13px;font-weight:bold;color:#111">Load transfer devices</div>

<!-- tiles -->
<div class="a" style="left:875px;top:266px;width:110px;height:110px;border:1px solid #ececec"></div>
<div class="a" style="left:1005px;top:266px;width:110px;height:110px;border:1px solid #ececec"></div>
<div class="a" style="left:875px;top:447px;width:110px;height:110px;border:1px solid #ececec"></div>
<div class="a" style="left:875px;top:629px;width:110px;height:110px;border:1px solid #ececec"></div>
<div class="a" style="left:1005px;top:629px;width:110px;height:110px;border:1px solid #ececec"></div>
<div class="a" style="left:1135px;top:629px;width:110px;height:110px;border:1px solid #ececec"></div>
<div class="a" style="left:875px;top:388px;font-size:12px;line-height:12px;color:#111">Negative volume</div>
<div class="a" style="left:1005px;top:388px;font-size:12px;line-height:12px;color:#111">Cutting plane</div>
<div class="a" style="left:875px;top:569px;font-size:12px;line-height:12px;color:#111">Surface support</div>
<div class="a" style="left:875px;top:752px;font-size:12px;line-height:12px;color:#111">Base plate</div>
<div class="a" style="left:1005px;top:752px;font-size:12px;line-height:12px;color:#111">Single Anchor</div>
<div class="a" style="left:1135px;top:752px;font-size:12px;line-height:12px;color:#111">Cast-in plate</div>

<div class="a" style="left:1186px;top:781px;width:75px;height:23px;background:#9b9b9b"></div>
<div class="a" style="left:1186px;top:786px;width:75px;text-align:center;font-size:12px;line-height:12px;color:#fff">Cancel</div>

<svg class="a" style="left:850px;top:260px" width="420" height="490">
 <g transform="translate(-850,-260)">
  <!-- Negative volume -->
  <path d="M880.1 314.2 L906.5 288.8 H979.1 V329.6 L953.4 354.8 H880.1 Z" fill="#ececec"/>
  <path d="M906.5 288.8 V329.6 H979.1 M906.5 329.6 L880.1 354.8" fill="none" stroke="#c8c8c8" stroke-width="0.8"/>
  <path d="M880.1 314.2 L906.5 288.8 H979.1 V329.6 L953.4 354.8 H880.1 Z M880.1 314.2 H953.4 L979.1 288.8 M953.4 314.2 V354.8" fill="none" stroke="#333" stroke-width="1.3" stroke-linejoin="round"/>
  <!-- Cutting plane -->
  <path id="cp" d="M1025.6 309 L1094.4 272.7 V329.6 L1025.6 366.2 Z" fill="#e9e9e9" stroke="#333" stroke-width="1.3" stroke-linejoin="round"/>
  <g stroke="#9a9a9a" stroke-width="0.9">
   <line x1="1037.1" y1="302.9" x2="1037.1" y2="360.1"/>
   <line x1="1048.5" y1="296.9" x2="1048.5" y2="354.1"/>
   <line x1="1060" y1="290.8" x2="1060" y2="348"/>
   <line x1="1071.5" y1="284.8" x2="1071.5" y2="341.9"/>
   <line x1="1083" y1="278.7" x2="1083" y2="335.7"/>
   <line x1="1025.6" y1="320.4" x2="1094.4" y2="284.1"/>
   <line x1="1025.6" y1="331.8" x2="1094.4" y2="295.5"/>
   <line x1="1025.6" y1="343.2" x2="1094.4" y2="306.9"/>
   <line x1="1025.6" y1="354.7" x2="1094.4" y2="318.3"/>
  </g>
  <!-- Surface support -->
  <rect x="881.2" y="463.8" width="92.8" height="55" fill="#d0d0d0"/>
  <path d="M881.2 463.8 V518.8 H900.7 M961 518.8 H974" fill="none" stroke="#333" stroke-width="1.3"/>
  <rect x="900.7" y="517.6" width="60.3" height="2.4" fill="#f5a878"/>
  <path d="M900.8 534.9 L909.9 520 L919 534.9 Z M921.9 534.9 L931 520 L940.1 534.9 Z M942.5 534.9 L951.6 520 L960.7 534.9 Z" fill="#f5a878"/>
  <path d="M900.8 539 H919 M921.9 539 H940.1 M942.5 539 H960.7" stroke="#f5a878" stroke-width="2"/>
  <!-- Base plate -->
  <rect x="879" y="668" width="92.3" height="55" fill="#d0d0d0"/>
  <path d="M879 668 H971.3 V723" fill="none" stroke="#333" stroke-width="1.3"/>
  <rect x="901.9" y="663" width="46.3" height="5" fill="#f5a070"/>
  <path d="M924.8 640 V658" stroke="#4a9a50" stroke-width="1.3" stroke-dasharray="2 2"/>
  <path d="M921.3 655 L924.8 661 L928.3 655 Z" fill="#3d8a46"/>
  <!-- Single anchor -->
  <rect x="1009" y="668" width="92.2" height="55" fill="#d0d0d0"/>
  <path d="M1009 668 H1101.2 V723" fill="none" stroke="#333" stroke-width="1.3"/>
  <rect x="1054.4" y="658.4" width="3.2" height="45" fill="#f5a070"/>
  <rect x="1052.2" y="701.5" width="7.6" height="4" fill="#f5a070"/>
  <path d="M1056 656 V640" stroke="#4a9a50" stroke-width="1.3" stroke-dasharray="2 2"/>
  <path d="M1052.5 641 L1056 634.5 L1059.5 641 Z" fill="#3d8a46"/>
  <!-- Cast-in plate -->
  <rect x="1139" y="668" width="92.4" height="55" fill="#d0d0d0"/>
  <path d="M1139 668 H1231.4 V723" fill="none" stroke="#333" stroke-width="1.3"/>
  <rect x="1158.5" y="667" width="53.2" height="4.6" fill="#f5a070"/>
  <path d="M1167.2 671 V686 M1203.2 671 V686 M1162.5 686 H1172 M1198.5 686 H1208 M1178.7 671 V693 Q1178.7 700 1170 700 H1162 M1191.7 671 V693 Q1191.7 700 1200 700 H1208.9" fill="none" stroke="#f5a070" stroke-width="2.2"/>
  <path d="M1184.9 644.7 V657" stroke="#4a9a50" stroke-width="1.3" stroke-dasharray="2 2"/>
  <path d="M1181.4 655 L1184.9 661 L1188.4 655 Z" fill="#3d8a46"/>
 </g>
</svg>
<!-- red annotations -->
<div class="a" style="left:996px;top:618px;width:131px;height:156px;border:4.5px solid #fe2d30;border-radius:8px"></div>
<div class="a" style="left:801px;top:57px;width:50px;height:106px;border:4.5px solid #fe2d30;border-radius:7px"></div>
<svg class="a" style="left:800px;top:160px" width="650" height="670">
 <g transform="translate(-800,-160)" fill="#fe2d30">
  <polygon points="817.8,177.1 829.1,175 829.1,197.1 834.8,197.1 834.8,201.8 818,201.8 818,197.1 823.5,197.1 823.5,180.6 817.8,182"/>
  <text x="1050.2" y="816" font-family="Liberation Sans" font-weight="bold" font-size="45" textLength="21.6" lengthAdjust="spacingAndGlyphs">2</text>
  <text x="1417" y="280.4" font-family="Liberation Sans" font-weight="bold" font-size="38" textLength="19.6" lengthAdjust="spacingAndGlyphs">3</text>
 </g>
</svg>
</body></html>
